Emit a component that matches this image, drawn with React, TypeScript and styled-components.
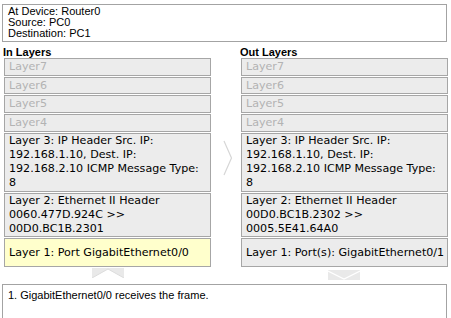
import React from "react";
import styled, { createGlobalStyle } from "styled-components";

const Global = createGlobalStyle`
  html, body { margin: 0; padding: 0; background: #ffffff; }
  body { font-family: "Liberation Sans", Arial, sans-serif; overflow: hidden; }
`;

const Page = styled.div`
  width: 451px;
  height: 318px;
  display: flex;
  flex-direction: column;
  overflow: hidden;
`;

const InfoBox = styled.div`
  box-sizing: border-box;
  margin: 4px 4px 0 2px;
  height: 38px;
  border: 1px solid #a3a3a3;
  padding: 1px 5px 0;
  font-size: 11px;
  line-height: 11px;
  color: #000;
`;

const Columns = styled.div`
  display: grid;
  grid-template-columns: 208px 29px 208px;
  margin: 4px 0 0 3px;
`;

const Column = styled.div`
  display: flex;
  flex-direction: column;
`;

const ColumnTitle = styled.div`
  font-size: 11px;
  font-weight: bold;
  line-height: 12px;
  height: 12px;
  color: #000;
`;

const LayerStack = styled.div`
  display: flex;
  flex-direction: column;
  gap: 1px;
  margin-left: 1px;
`;

const LayerBox = styled.div<{ $dim?: boolean; $hi?: boolean; $h?: number }>`
  box-sizing: border-box;
  width: 207px;
  border: 1px solid #a6a6a6;
  background: ${(p) => (p.$hi ? "#ffffcc" : "#ececec")};
  color: ${(p) => (p.$dim ? "#b3b3b3" : "#000")};
  font-family: "DejaVu Sans", Verdana, sans-serif;
  font-size: 11.1px;
  line-height: ${(p) => (p.$dim ? "15.7px" : "14.2px")};
  padding: 0 4px;
  min-height: ${(p) => (p.$h ? `${p.$h}px` : "auto")};
  display: flex;
  align-items: center;
  white-space: nowrap;
`;

const Middle = styled.div`
  display: flex;
  align-items: flex-start;
  justify-content: center;
  padding: 94px 0 0 4px;
`;

const ArrowRow = styled.div`
  display: grid;
  grid-template-columns: 237px 208px;
  margin: 1px 0 0 3px;
  height: 12px;
`;

const ArrowCell = styled.div<{ $offset: number; $top: number }>`
  padding-left: ${(p) => p.$offset}px;
  padding-top: ${(p) => p.$top}px;
`;

const ArrowTab = styled.div`
  width: 32px;
  height: 10px;
  background: #e9e9e9;
  display: flex;
`;

const LogBox = styled.div`
  margin: 4px 4px 0 2px;
  flex: 1;
  border: 1px solid #a3a3a3;
  border-bottom: none;
  padding: 4px 5px 0;
  font-size: 11px;
  line-height: 12px;
  color: #000;
`;

const layersIn = [
  "Layer 3: IP Header Src. IP:\n192.168.1.10, Dest. IP:\n192.168.2.10 ICMP Message Type:\n8",
  "Layer 2: Ethernet II Header\n0060.477D.924C >>\n00D0.BC1B.2301",
];
const layersOut = [
  "Layer 3: IP Header Src. IP:\n192.168.1.10, Dest. IP:\n192.168.2.10 ICMP Message Type:\n8",
  "Layer 2: Ethernet II Header\n00D0.BC1B.2302 >>\n0005.5E41.64A0",
];

const Lines: React.FC<{ text: string }> = ({ text }) => (
  <div>
    {text.split("\n").map((l, i) => (
      <div key={i}>{l}</div>
    ))}
  </div>
);

const Stack: React.FC<{ items: string[]; l1: string; hi?: boolean }> = ({ items, l1, hi }) => (
  <LayerStack>
    {["Layer7", "Layer6", "Layer5", "Layer4"].map((l) => (
      <LayerBox key={l} $dim>
        {l}
      </LayerBox>
    ))}
    {items.map((t, i) => (
      <LayerBox key={i}>
        <Lines text={t} />
      </LayerBox>
    ))}
    <LayerBox $hi={hi} $h={29}>
      {l1}
    </LayerBox>
  </LayerStack>
);

export default function App() {
  return (
    <>
      <Global />
      <Page>
        <InfoBox>
          <div>At Device: Router0</div>
          <div>Source: PC0</div>
          <div>Destination: PC1</div>
        </InfoBox>
        <Columns>
          <Column>
            <ColumnTitle>In Layers</ColumnTitle>
            <Stack items={layersIn} l1="Layer 1: Port GigabitEthernet0/0" hi />
          </Column>
          <Middle>
            <svg width="10" height="36" viewBox="0 0 10 36">
              <polyline points="1,1 8.5,18 1,35" fill="none" stroke="#d6d6d6" strokeWidth="1.2" />
            </svg>
          </Middle>
          <Column>
            <ColumnTitle>Out Layers</ColumnTitle>
            <Stack items={layersOut} l1="Layer 1: Port(s): GigabitEthernet0/1" />
          </Column>
        </Columns>
        <ArrowRow>
          <ArrowCell $offset={89} $top={0}>
            <ArrowTab>
              <svg width="32" height="10" viewBox="0 0 32 10">
                <polygon points="0,10 16,1 32,10" fill="#ffffff" />
                <polyline points="0,10 16,1 32,10" fill="none" stroke="#dcdcdc" strokeWidth="1" />
              </svg>
            </ArrowTab>
          </ArrowCell>
          <ArrowCell $offset={88} $top={2}>
            <ArrowTab>
              <svg width="32" height="10" viewBox="0 0 32 10">
                <polyline points="0,1 16,9 32,1" fill="none" stroke="#ffffff" strokeWidth="1.2" />
              </svg>
            </ArrowTab>
          </ArrowCell>
        </ArrowRow>
        <LogBox>1. GigabitEthernet0/0 receives the frame.</LogBox>
      </Page>
    </>
  );
}
